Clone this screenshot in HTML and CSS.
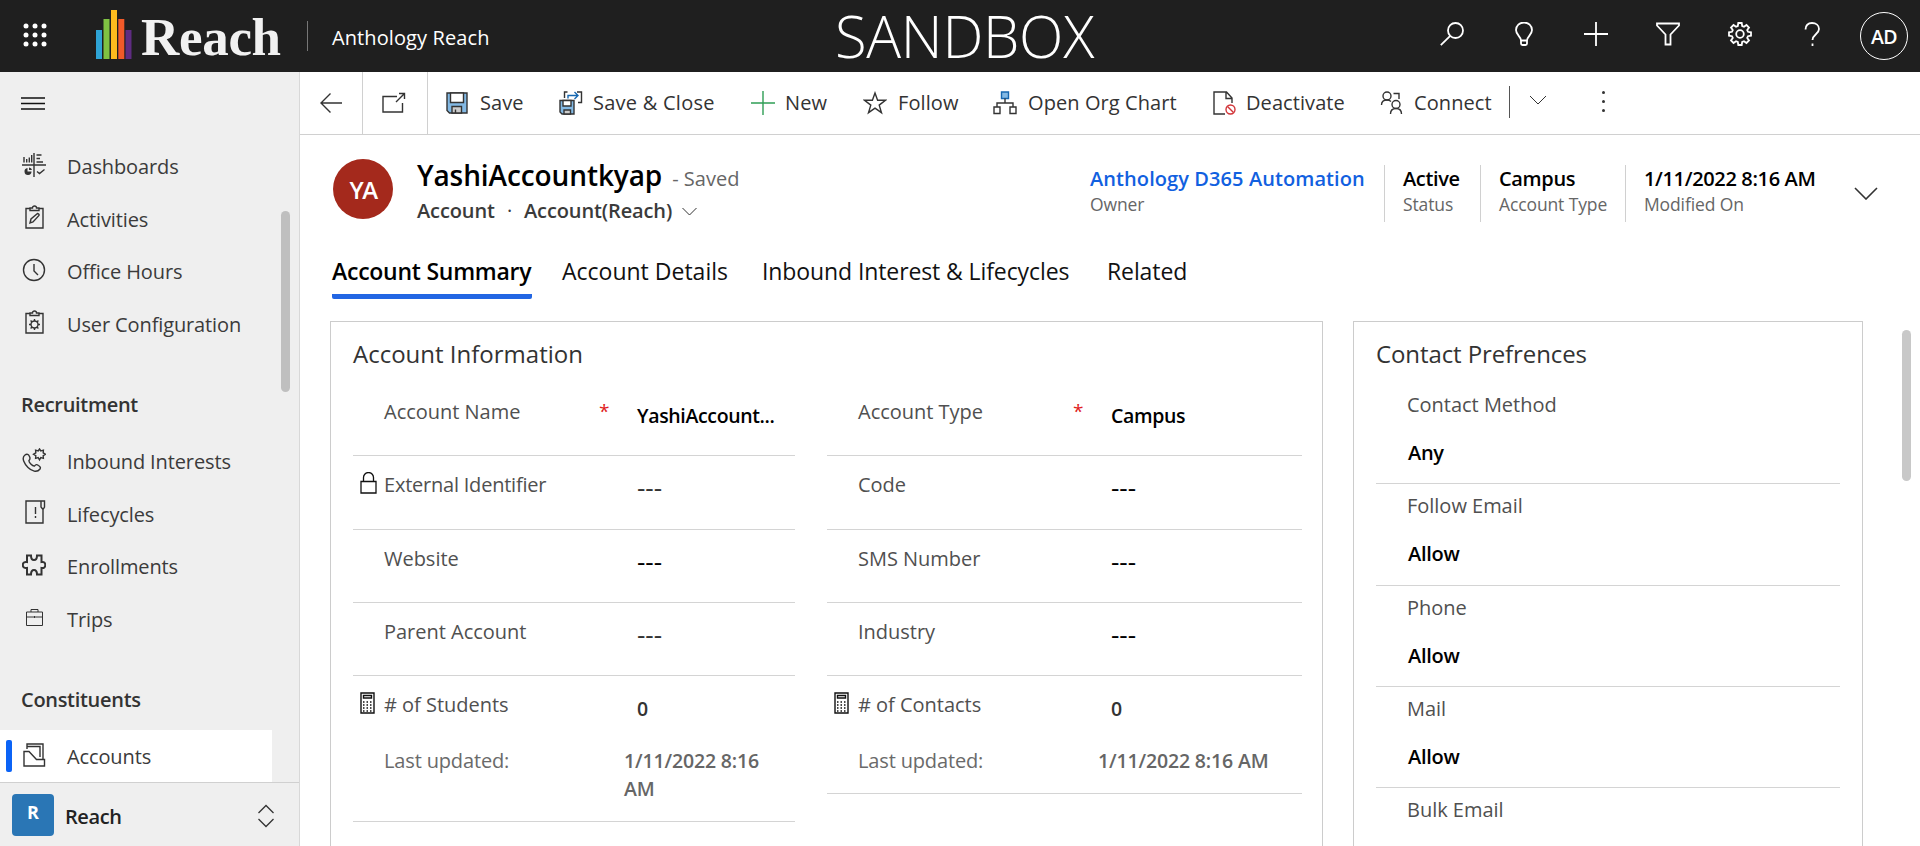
FILE: index.html
```html
<!DOCTYPE html>
<html lang="en">
<head>
<meta charset="utf-8">
<title>YashiAccountkyap - Anthology Reach</title>
<link rel="stylesheet" href="styles.css">
</head>
<body>
<div class="app">
  <header class="topbar">
    <svg class="waffle" width="24" height="24" viewBox="0 0 24 24" fill="#fff"><circle cx="3" cy="3" r="2.5"/><circle cx="12" cy="3" r="2.5"/><circle cx="21" cy="3" r="2.5"/><circle cx="3" cy="12" r="2.5"/><circle cx="12" cy="12" r="2.5"/><circle cx="21" cy="12" r="2.5"/><circle cx="3" cy="21" r="2.5"/><circle cx="12" cy="21" r="2.5"/><circle cx="21" cy="21" r="2.5"/></svg>
    <div class="brand">
      <svg width="36" height="50" viewBox="0 0 36 50"><path fill="#2ea3d5" d="M0 20h6v29H0z"/><path fill="#7fc242" d="M7.500 9h6v40h-6z"/><path fill="#fdbb1e" d="M15 0h6v49h-6z"/><path fill="#f15a29" d="M22.300 9h6v40h-6z"/><path fill="#5f2c82" d="M29.500 20h6v29h-6z"/></svg>
      <span class="brand-name">Reach</span>
    </div>
    <span class="topbar-rule"></span>
    <span class="app-name">Anthology Reach</span>
    <span class="env-name">SANDBOX</span>
    <nav class="top-actions">
      <svg viewBox="0 0 24 24"><circle cx="15.500" cy="8.500" r="7.500"/><path d="M10.200 13.800.8 23.200"/></svg>
      <svg viewBox="0 0 24 24"><path d="M9 18.500c0-4-5-5.500-5-10.500a8 7.500 0 0 1 16 0c0 5-5 6.500-5 10.500zM9 18.500V21.500a1.500 1.500 0 0 0 1.500 1.500h3a1.500 1.500 0 0 0 1.500-1.500V18.500" /></svg>
      <svg viewBox="0 0 24 24"><path d="M12 0v24M0 12h24"/></svg>
      <svg viewBox="0 0 24 24"><path d="M1 1.500h22v2l-8.500 9V22.500h-5v-10L1 3.500z"/></svg>
      <svg viewBox="0 0 24 24"><circle cx="12" cy="12" r="3.800"/><path d="M10.300 1h3.400l.5 3 1.800.8 2.500-1.800 2.500 2.500-1.800 2.500.8 1.800 3 .5v3.400l-3 .5-.8 1.800 1.800 2.500-2.500 2.500-2.500-1.800-1.800.8-.5 3h-3.400l-.5-3-1.800-.8L5.500 21 3 18.500 4.800 16 4 14.200l-3-.5v-3.400l3-.5L4.800 8 3 5.500 5.500 3 8 4.800 9.800 4z"/></svg>
      <svg viewBox="0 0 24 24"><path d="M5.500 7.500C5.500 3.500 8 1 12 1s7 2.400 7 6c0 5-6.500 5.500-6.500 11M12.500 21.500V24"/></svg>
    </nav>
    <span class="user">AD</span>
  </header>

  <div class="body">
    <aside class="sidebar">
      <div class="menu"><svg width="24" height="13" viewBox="0 0 24 13"><path d="M0 1h24M0 6.500h24M0 12h24"/></svg></div>
      <ul class="nav">
        <li><svg viewBox="0 0 24 24"><path d="M0 12h24M12 0v24"/><path d="M2 9.500V4M4.700 9.500V6M7.300 9.500V4.500M9.700 9.500V2M14.500 2h5M14.500 5.500h3.500M14.500 9H21M15 18.500l2.500 2 5-4"/><path class="pie" d="M5.500 15v3.500h4a3.500 3.500 0 1 1-4-3.500zM7 14.500a3 3 0 0 1 3 2.500H7z"/></svg><span>Dashboards</span></li>
        <li><svg viewBox="0 0 24 24"><path d="M8 3.500H4v19.500h17V3.500h-4M8 5.500v-2.500h2.500a2 2 0 0 1 4 0H17v2.500zM8 18l1-4 6.500-5.500q2 .5 1.500 2L11 17z"/></svg><span>Activities</span></li>
        <li><svg viewBox="0 0 24 24"><circle cx="12" cy="12" r="10.500"/><path d="M12 6v7l4 4"/></svg><span>Office Hours</span></li>
        <li><svg viewBox="0 0 24 24"><path d="M8 3.500H4v19.500h17V3.500h-4M8 5.500v-2.500h2.500a2 2 0 0 1 4 0H17v2.500z"/><circle cx="12.500" cy="14.500" r="3.500"/><path d="M12.500 9v2M12.500 18v2M7 14.500h2M16 14.500h2M8.600 10.600 10 12M15 17l1.400 1.400M8.600 18.400 10 17M15 12l1.400-1.400"/></svg><span>User Configuration</span></li>
        <li class="group">Recruitment</li>
        <li><svg viewBox="0 0 24 24"><path d="M3 7c-4 3-.5 9 3 12.500s9 5.500 12 1.500c1-1.500 0-2.500-1.500-3.500-2-1.400-2.500-1-4 .5-2 .5-6-4-5.500-5.500 1.500-1.500 1.500-2 .5-4C6.500 6.500 5 5.500 3 7z"/><path d="m17.500 1 1.300 2 2.600-.8-.2 2.600 2.300 1.500-2.300 1.400.2 2.700-2.600-.8-1.300 2.200-1.300-2.200-2.600.8.200-2.700-2.300-1.400 2.300-1.500-.2-2.600 2.600.8z"/></svg><span>Inbound Interests</span></li>
        <li><svg viewBox="0 0 24 24"><path d="M19 1H4v22h17V9M19 1h3.500v6L21 9.500 19 7zM13.500 7v7M13.500 16v2"/></svg><span>Lifecycles</span></li>
        <li><svg class="bold" viewBox="0 0 24 24"><path d="M5 2.500h4c0 3 .8 4.500 3 4.500s3-1.500 3-4.500h4.500v6.500c2.500-.5 3.800.8 3.800 3s-1.300 3.500-3.800 3v6.500H15c0-3-.8-4.500-3-4.500s-3 1.500-3 4.500H5V15c-2.500.5-4.200-.8-4.200-3S2.500 8.500 5 9z"/></svg><span>Enrollments</span></li>
        <li><svg class="fine" viewBox="0 0 24 24"><path d="M4.500 7h16v13.500h-16zM4.500 12h16M9 7V4.500h7V7M12.500 11v2"/></svg><span>Trips</span></li>
        <li class="group">Constituents</li>
        <li class="current"><svg viewBox="0 0 24 24"><path d="M5 6V1h16v15.500M5 3.500h13V14M2 23V8.500h5l7.500 8H22.500V23z"/></svg><span>Accounts</span></li>
      </ul>
      <span class="scroll side-scroll"></span>
      <div class="area">
        <span class="area-tile">R</span><span class="area-name">Reach</span>
        <svg width="16" height="24" viewBox="0 0 16 24"><path d="M.5 9 8 1.500 15.500 9M.5 15 8 22.500 15.500 15"/></svg>
      </div>
    </aside>

    <main class="main">
      <div class="commands">
        <span class="cmd back"><svg viewBox="0 0 24 24"><path d="M11.500 2.500 2 12l9.500 9.500M2 12h21"/></svg></span>
        <span class="cmd pop"><svg viewBox="0 0 24 24"><path d="M15 5.500H1V21h19.500V12M14 11 22.500 2.500M17 2.500h5.500V8"/></svg></span>
        <span class="cmd save"><svg viewBox="0 0 24 24"><path fill="#83b9e4" d="M2 2h20v20H4.500L2 19.500z"/><path fill="#fff" d="M5.500 2h13v9.500h-13z"/><path fill="#ccc" d="M7 22v-6.500h9.500V22zM10.500 18.500V22"/></svg>Save</span>
        <span class="cmd saveclose"><svg viewBox="0 0 24 24"><path fill="#83b9e4" d="M1 9.500h14V23H3l-2-2z"/><path fill="#fff" d="M4 9.500h8V15H4z"/><path fill="#ccc" d="M5 23v-4h6.500v4z"/><path d="M8.500 1H5.500v6M18 1h4.500v10.500H19"/><path stroke="#1667b0" d="M9 7.500v-3h10M15.500 1 19 4.500 15.500 8"/></svg>Save &amp; Close</span>
        <span class="cmd new"><svg viewBox="0 0 24 24"><path stroke="#2f9e55" d="M12 0v24M0 12h24"/></svg>New</span>
        <span class="cmd follow"><svg viewBox="0 0 24 24"><path d="m12 2 2.600 7.300h7.800l-6.200 4.800 2.300 7.600L12 17.200l-6.500 4.500 2.300-7.600L1.600 9.300h7.800z"/></svg>Follow</span>
        <span class="cmd org"><svg viewBox="0 0 24 24"><path stroke="#1667b0" fill="#83b9e4" d="M8.500 1h7v6.500h-7z"/><path d="M12 7.500V12M4 16v-4h16v4M1 16h6v6.500H1zM17 16h6v6.500h-6z"/></svg>Open Org Chart</span>
        <span class="cmd deact"><svg viewBox="0 0 24 24"><path d="M13 23H2V1h12.500L20 7v5M14 1v6.500h6"/><g stroke="#d13438"><circle cx="18.500" cy="18.500" r="4.500"/><path d="m15.500 15.500 6 6"/></g></svg>Deactivate</span>
        <span class="cmd connect"><svg viewBox="0 0 24 24"><circle cx="7" cy="5" r="4"/><path d="M1.500 14c0-3 2-5 5.500-5 1.500 0 3 .5 4 1.500M13.500 2.500H19V8"/><circle cx="16" cy="13.500" r="4"/><path d="M10.500 23c0-3.500 2-5.500 5.500-5.500s5.500 2 5.500 5.500"/></svg>Connect</span>
        <span class="cmd more"><svg viewBox="0 0 18 10"><path d="M1 1l8 8 8-8"/></svg></span>
        <span class="cmd dots"><i></i><i></i><i></i></span>
      </div>

      <section class="record">
        <span class="avatar">YA</span>
        <div class="identity">
          <div class="title-line"><h1>YashiAccountkyap</h1><span class="saved">- Saved</span></div>
          <div class="form-line"><span class="entity">Account</span><b>·</b><span>Account(Reach)</span><svg width="15" height="9" viewBox="0 0 15 9"><path d="M.5 1l7 7 7-7"/></svg></div>
        </div>
        <dl class="facts">
          <div class="owner"><dt>Anthology D365 Automation</dt><dd>Owner</dd></div>
          <div class="status"><dt>Active</dt><dd>Status</dd></div>
          <div class="type"><dt>Campus</dt><dd>Account Type</dd></div>
          <div class="modified"><dt>1/11/2022 8:16 AM</dt><dd>Modified On</dd></div>
        </dl>
        <svg class="expand" width="24" height="13" viewBox="0 0 24 13"><path d="M1 1l11 11L23 1"/></svg>
      </section>

      <nav class="tabs">
        <span class="tab selected">Account Summary</span><span class="tab details">Account Details</span><span class="tab inbound">Inbound Interest &amp; Lifecycles</span><span class="tab">Related</span>
      </nav>

      <div class="content">
        <section class="card info">
          <h2>Account Information</h2>
          <div class="columns">
            <div class="fields">
              <div class="field"><i></i><label>Account Name</label><em>*</em><span class="black">YashiAccount...</span></div>
              <div class="field"><svg class="lock" width="17" height="22" viewBox="0 0 17 22"><path d="M1 9.500h15V21H1zM3.500 9.500V5.500a5 5 0 0 1 10 0v4"/></svg><label class="tight">External Identifier</label><em></em><span class="empty">---</span></div>
              <div class="field"><i></i><label>Website</label><em></em><span class="empty black">---</span></div>
              <div class="field"><i></i><label>Parent Account</label><em></em><span class="empty">---</span></div>
              <div class="field rollup"><svg width="15" height="22" viewBox="0 0 15 22"><path d="M1 1h13v20H1zM3.500 3.500h8v2.500h-8z"/><path stroke-dasharray="1.500 2" d="M3 10h10M3 13h10M3 16h10M3 19h10"/></svg><label># of Students</label><em></em><span class="count">0</span><i></i><label class="stamp-label">Last updated:</label><span class="stamp">1/11/2022 8:16 AM</span></div>
            </div>
            <div class="fields">
              <div class="field"><i></i><label>Account Type</label><em>*</em><span class="black">Campus</span></div>
              <div class="field"><i></i><label>Code</label><em></em><span class="empty black">---</span></div>
              <div class="field"><i></i><label>SMS Number</label><em></em><span class="empty black">---</span></div>
              <div class="field"><i></i><label>Industry</label><em></em><span class="empty black">---</span></div>
              <div class="field rollup"><svg width="15" height="22" viewBox="0 0 15 22"><path d="M1 1h13v20H1zM3.500 3.500h8v2.500h-8z"/><path stroke-dasharray="1.500 2" d="M3 10h10M3 13h10M3 16h10M3 19h10"/></svg><label># of Contacts</label><em></em><span class="count">0</span><i></i><label class="stamp-label">Last updated:</label><span class="stamp">1/11/2022 8:16 AM</span></div>
            </div>
          </div>
        </section>
        <section class="card prefs">
          <h2>Contact Prefrences</h2>
          <div class="pref"><label>Contact Method</label><span>Any</span></div>
          <div class="pref"><label>Follow Email</label><span>Allow</span></div>
          <div class="pref"><label>Phone</label><span>Allow</span></div>
          <div class="pref"><label>Mail</label><span>Allow</span></div>
          <div class="pref"><label>Bulk Email</label></div>
        </section>
      </div>
      <span class="scroll main-scroll"></span>
    </main>
  </div>
</div>
</body>
</html>
```
FILE: styles.css
```css
* { box-sizing: border-box; }
body { margin: 0; overflow: hidden; background: #fff; color: #333; font: 20px/28px "Open Sans", "Noto Sans", sans-serif; }
h1, h2, dl, dd, ul { margin: 0; padding: 0; font-weight: 400; }
svg { display: block; flex: none; fill: none; stroke: #333; stroke-width: 1.3; }
i, em { font-style: normal; }
.app { display: flex; flex-direction: column; height: 846px; }

.topbar { position: relative; display: flex; align-items: center; height: 72px; flex: none; background: #1f1f1f; color: #fff; }
.waffle { margin: -2px 0 0 23px; fill: #fff; stroke: none; }
.brand { display: flex; margin-left: 49px; height: 50px; margin-top: -3px; width: 211px; }
.brand svg { stroke: none; }
.brand-name { margin: 0 0 0 9px; font: 700 53px/54px "Liberation Serif", serif; letter-spacing: -0.3px; color: #f1f1f1; }
.topbar-rule { width: 1px; height: 30px; background: #777; }
.app-name { margin: 4px 0 0 24px; white-space: nowrap; letter-spacing: 0.1px; }
.env-name { position: absolute; left: 835px; top: -4px; font-size: 58px; line-height: 80px; font-weight: 300; letter-spacing: -0.3px; }
.top-actions { display: flex; gap: 48px; margin: -4px 0 0 auto; }
.top-actions svg { width: 24px; height: 24px; stroke: #fff; stroke-width: 1.8; }
.user { width: 48px; height: 48px; margin: 0 12px 0 36px; border: 1px solid #fff; border-radius: 50%; text-align: center; line-height: 48px; font-weight: 600; font-size: 19.500px; letter-spacing: -0.5px; }

.body { display: flex; flex: 1; min-height: 0; }
.sidebar { position: relative; display: flex; flex-direction: column; width: 300px; flex: none; background: #efefef; border-right: 1px solid #d8d8d8; color: #3b3b3b; }
.menu { height: 67.500px; padding: 25px 0 0 21px; flex: none; }
.menu svg { stroke: #111; stroke-width: 1.300; }
.nav { list-style: none; height: 642.500px; overflow: hidden; letter-spacing: -0.12px; }
.nav li { display: flex; align-items: center; height: 52.500px; padding: 3px 0 0 22px; }
.nav svg { width: 24px; height: 24px; margin: -5px 21px 0 0; stroke-width: 1.400; }
.nav .pie { fill: #333; stroke: none; }
.nav .bold { stroke-width: 2; }
.nav .fine { stroke-width: 1; }
.nav .group { height: 85px; padding: 25px 0 0 21px; font-weight: 600; color: #333; letter-spacing: -0.3px; }
.nav .current { position: relative; width: 272px; background: #fff; }
.nav .current::before { content: ""; position: absolute; left: 6px; top: 10px; width: 6px; height: 32px; border-radius: 2px; background: #0b63f6; }
.scroll { position: absolute; border-radius: 5px; background: #bfbfbf; }
.side-scroll { left: 281px; top: 139px; width: 9px; height: 181px; }
.area { display: flex; height: 64px; flex: none; padding: 11px 0 0 12px; border-top: 1px solid #d0d0d0; }
.area-tile { width: 42px; height: 42px; border-radius: 4px; background: #2a76b5; color: #fff; font: 700 18px/37px "Open Sans", sans-serif; text-align: center; }
.area-name { width: 204px; padding: 9px 0 0 11px; font-weight: 600; color: #222; letter-spacing: -0.4px; }
.area svg { margin-top: 10px; }

.main { position: relative; flex: 1; min-width: 0; }
.commands { display: flex; height: 63px; border-bottom: 1px solid #d0d0d0; letter-spacing: 0.08px; }
.cmd { display: flex; align-items: center; flex: none; white-space: nowrap; gap: 10px; }
.cmd svg { width: 24px; height: 24px; stroke-width: 1.400; }
.back { width: 63px; padding-left: 19px; border-right: 1px solid #d0d0d0; }
.pop { width: 65px; padding-left: 19px; border-right: 1px solid #d0d0d0; }
.save { width: 131px; padding-left: 17px; gap: 11px; }
.saveclose { width: 192px; letter-spacing: 0.25px; }
.new { width: 112px; }
.follow { width: 130px; gap: 11px; }
.org { width: 219px; gap: 11px; }
.deact { width: 168px; }
.connect { width: 129px; }
.more { width: 85px; height: 32px; margin-top: 14px; padding: 0 0 4px 19px; border-left: 1px solid #555; }
.more svg { width: 18px; height: 10px; stroke-width: 1; }
.dots { flex-direction: column; gap: 6px; width: 18px; padding-top: 19px; }
.dots i { width: 3px; height: 3px; border-radius: 50%; background: #333; }

.record { display: flex; height: 107px; padding: 24px 0 0 33px; }
.avatar { width: 60px; height: 60px; border-radius: 50%; background: #a4291c; color: #fff; font-size: 24px; font-weight: 600; line-height: 62px; text-align: center; letter-spacing: -1.5px; }
.identity { width: 533px; padding-left: 24px; }
.title-line { display: flex; align-items: baseline; gap: 10px; height: 38px; color: #000; }
h1 { font-size: 28px; line-height: 32px; font-weight: 600; letter-spacing: -0.1px; }
.saved { color: #666; font-size: 20px; }
.form-line { display: flex; align-items: center; height: 28px; color: #3b3b3b; font-weight: 600; letter-spacing: -0.12px; }
.form-line b { width: 29px; text-align: center; font-weight: 400; }
.form-line svg { margin-left: 10px; stroke-width: 1; }
.entity { width: 78px; }
.facts { display: flex; width: 738px; margin-left: 164px; padding-top: 6px; height: 63px; white-space: nowrap; }
.facts div { flex: none; padding: 0 18px; height: 57px; border-left: 1px solid #d0d0d0; }
.facts .owner { border: 0; width: 294px; padding-left: 0; }
.facts .owner dt { color: #1160e0; letter-spacing: 0.08px; }
.facts .status { width: 96px; }
.facts .type { width: 145px; }
dt { font-weight: 600; color: #000; line-height: 27px; letter-spacing: -0.35px; }
dd { color: #666; font-size: 17.500px; line-height: 25px; letter-spacing: -0.12px; }
.expand { margin: 28px 0 0 26px; stroke-width: 1.600; }

.tabs { display: flex; height: 79px; padding: 12px 0 0 32px; color: #111; font-size: 23px; white-space: nowrap; letter-spacing: -0.1px; }
.tab { height: 45px; line-height: 34px; }
.selected { width: 200px; height: 45px; margin-right: 30px; font-weight: 600; color: #000; border-bottom: 5px solid #2266e3; border-radius: 2px; letter-spacing: -0.25px; }
.details { width: 200px; letter-spacing: 0; }
.inbound { width: 345px; }

.content { display: flex; gap: 30px; height: 525px; padding-left: 30px; overflow: hidden; }
.card { border: 1px solid #ccc; border-bottom: 0; padding-left: 22px; }
.info { width: 993px; }
.prefs { width: 510px; }
h2 { font-size: 24px; line-height: 32px; padding-top: 16px; height: 61px; }
.columns { display: flex; gap: 32px; align-items: flex-start; }
.fields:first-child { width: 442px; }
.fields:last-child { width: 475px; }
.field { display: grid; grid-template-columns: 31px 215px 38px 1fr; align-items: start; height: 73.300px; padding-top: 15px; border-bottom: 1px solid #d4d4d4; }
.field svg { margin: 1px 0 0 7px; stroke: #111; }
.field svg:not(.lock) { stroke-width: 1.400; }
.field .lock { margin-top: 1px; }
label { color: #505050; white-space: nowrap; letter-spacing: -0.02px; }
.tight { letter-spacing: -0.22px; }
.field em { color: #e02020; font-size: 19px; line-height: 26px; }
.field span { padding-top: 4px; font-weight: 600; color: #333; font-size: 19.500px; letter-spacing: -0.35px; }
.field .empty { padding-top: 2px; font-size: 26px; font-weight: 500; letter-spacing: 0; }
.field .black { color: #000; }
.rollup { grid-template-columns: 31px 215px 25px 13px 1fr; grid-template-rows: 55.500px auto; height: auto; padding-bottom: 18px; }
.field .count { grid-column: 5; }
.field .stamp { grid-column: 4 / 6; padding: 0 20px 0 0; color: #666; letter-spacing: -0.15px; }
.rollup .stamp-label { grid-column: 2 / 4; color: #6a6a6a; letter-spacing: -0.15px; }
.prefs { padding-right: 22px; }
.prefs h2 { letter-spacing: -0.1px; }
.pref { height: 101.300px; padding: 8px 0 0 31px; border-bottom: 1px solid #d4d4d4; }
.pref label, .pref span { display: block; }
.pref span { padding: 20px 0 0 1px; font-weight: 600; color: #000; letter-spacing: -0.3px; }
.main-scroll { left: 1602px; top: 258px; width: 9px; height: 151px; background: #c8c8c8; }
```
